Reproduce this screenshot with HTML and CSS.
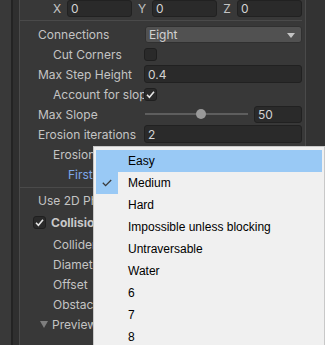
FILE: index.html
```html
<!DOCTYPE html>
<html lang="en">
<head>
    <meta charset="UTF-8">
    <meta name="viewport" content="width=device-width, initial-scale=1.0">
    <title>Grid Graph</title>
    <link rel="stylesheet" href="styles.css">
</head>
<body>
<div class="window">
    <div class="gutter"></div>
    <div class="rail"></div>
    <div class="panel">
        <div class="vec">
            <span class="axis">X</span><div class="field small">0</div>
            <span class="axis">Y</span><div class="field small">0</div>
            <span class="axis">Z</span><div class="field small">0</div>
        </div>
        <div class="sep top"></div>

        <div class="row">
            <div class="label">Connections</div>
            <div class="popup">Eight<span class="arrow"></span></div>
        </div>
        <div class="row">
            <div class="label in1">Cut Corners</div>
            <div class="check"></div>
        </div>
        <div class="row">
            <div class="label">Max Step Height</div>
            <div class="field">0.4</div>
        </div>
        <div class="row">
            <div class="label in1">Account for slopes</div>
            <div class="check on">
                <svg width="11" height="11" viewBox="0 0 11 11"><path d="M2 5.8 L4.4 8.2 L9 2.8" fill="none" stroke="#e6e6e6" stroke-width="1.6"/></svg>
            </div>
        </div>
        <div class="row">
            <div class="label">Max Slope</div>
            <div class="slider"><div class="track"></div><div class="knob"></div></div>
            <div class="field num">50</div>
        </div>
        <div class="row">
            <div class="label">Erosion iterations</div>
            <div class="field">2</div>
        </div>
        <div class="row">
            <div class="label in1 under">Erosion Uses Tags</div>
            <div class="check"></div>
        </div>
        <div class="row">
            <div class="label in2 link under">First Tag</div>
            <div class="popup"><span class="arrow"></span></div>
        </div>
        <div class="sep bottom"></div>

        <div class="row">
            <div class="label under">Use 2D Physics</div>
            <div class="check"></div>
        </div>
        <div class="row head">
            <div class="check on toggle">
                <svg width="11" height="11" viewBox="0 0 11 11"><path d="M2 5.8 L4.4 8.2 L9 2.8" fill="none" stroke="#e6e6e6" stroke-width="1.6"/></svg>
            </div>
            <span class="bold under-head">Collision testing</span>
        </div>
        <div class="row">
            <div class="label in1 under">Collider type</div>
            <div class="popup"><span class="arrow"></span></div>
        </div>
        <div class="row">
            <div class="label in1 under">Diameter</div>
            <div class="field"></div>
        </div>
        <div class="row">
            <div class="label in1 under">Offset</div>
            <div class="field"></div>
        </div>
        <div class="row">
            <div class="label in1 under">Obstacle Layer Mask</div>
            <div class="popup"><span class="arrow"></span></div>
        </div>
        <div class="row">
            <div class="label fold under"><span class="tri"></span>Preview</div>
        </div>
    </div>
    <div class="side"></div>

    <div class="menu">
        <div class="item hot"><span class="tick"></span><span>Easy</span></div>
        <div class="item"><span class="tick sel">
            <svg width="10" height="8" viewBox="0 0 10 8"><path d="M0.8 3.8 L3.6 6.6 L9.2 1" fill="none" stroke="#3a3a3a" stroke-width="1.3"/></svg>
        </span><span>Medium</span></div>
        <div class="item"><span class="tick"></span><span>Hard</span></div>
        <div class="item"><span class="tick"></span><span>Impossible unless blocking</span></div>
        <div class="item"><span class="tick"></span><span>Untraversable</span></div>
        <div class="item"><span class="tick"></span><span>Water</span></div>
        <div class="item"><span class="tick"></span><span>6</span></div>
        <div class="item"><span class="tick"></span><span>7</span></div>
        <div class="item"><span class="tick"></span><span>8</span></div>
    </div>
</div>
</body>
</html>
```

FILE: styles.css
```css
body {
    margin: 0;
    background: #383838;
    font-family: Inter, "Liberation Sans", sans-serif;
    font-size: 12px;
    color: #c4c4c4;
}
.window {
    position: relative;
    display: flex;
    height: 345px;
    overflow: hidden;
}
.gutter {
    width: 11px;
    background: #393939;
    border-right: 2px solid #232323;
}
.rail { width: 6px; background: #2f2f2f; }
.panel {
    width: 287px;
    flex: none;
    margin-top: -2px;
    padding-right: 3px;
    box-sizing: border-box;
    border-left: 1px solid #4a4a4a;
    border-right: 1px solid #4a4a4a;
    background: #383838;
}
.side { flex: 1; background: #333; }

.vec {
    display: flex;
    align-items: center;
    height: 20px;
    padding-left: 27px;
}
.axis { width: 20px; text-align: center; }
.sep { height: 1px; background: #4a4a4a; }
.sep.top { margin: 2px 0 3px; }
.sep.bottom { margin: 3px 0 2px; }

.row {
    display: flex;
    align-items: center;
    height: 20px;
    padding-left: 18px;
}
.row.head { margin: 2px 0; }
.label {
    width: 106px;
    flex: none;
    box-sizing: border-box;
    white-space: nowrap;
    overflow: hidden;
}
/* rows hidden behind the popup menu: clip labels at its left edge */
.label.under { width: 55px; margin-right: 51px; }
.under-head {
    width: 42px;
    flex: none;
    overflow: hidden;
    white-space: nowrap;
    margin-right: 51px;
}
.in1 { padding-left: 15px; }
.in2 { padding-left: 30px; }
.link { color: #7fa7e8; }
.bold { font-weight: bold; color: #c8c8c8; }

.field {
    flex: 1;
    height: 18px;
    line-height: 17px;
    box-sizing: border-box;
    padding-left: 3px;
    background: #2a2a2a;
    border: 1px solid #212121;
    border-radius: 3px;
    color: #d2d2d2;
}
.field.small { flex: none; width: 65px; height: 17px; line-height: 15px; }
.field.num { flex: none; width: 48px; height: 17px; line-height: 15px; }
.popup {
    position: relative;
    flex: 1;
    height: 17px;
    line-height: 15px;
    box-sizing: border-box;
    padding-left: 3px;
    margin-left: 1px;
    background: #515151;
    border: 1px solid #303030;
    border-radius: 3px;
    color: #d2d2d2;
}
.arrow {
    position: absolute;
    right: 6px;
    top: 6px;
    border-left: 4px solid transparent;
    border-right: 4px solid transparent;
    border-top: 5px solid #c4c4c4;
}
.check {
    width: 13px;
    height: 13px;
    box-sizing: border-box;
    background: #2a2a2a;
    border: 1px solid #1f1f1f;
    border-radius: 3px;
    display: flex;
    align-items: center;
    justify-content: center;
}
.check.toggle { margin-left: -5px; margin-right: 5px; }

.slider {
    position: relative;
    flex: 1;
    height: 20px;
    margin-right: 6px;
}
.track {
    position: absolute;
    left: 1px;
    right: 0;
    top: 9px;
    height: 2px;
    background: #5e5e5e;
}
.knob {
    position: absolute;
    left: 52px;
    top: 5px;
    width: 10px;
    height: 10px;
    border-radius: 50%;
    background: #999;
}
.fold { display: flex; align-items: center; }
.tri {
    flex: none;
    margin: 0 4px 0 2px;
    border-left: 4px solid transparent;
    border-right: 4px solid transparent;
    border-top: 7px solid #7e7e7e;
}

.menu {
    position: absolute;
    left: 93px;
    top: 146px;
    width: 232px;
    box-sizing: border-box;
    padding: 3px 2px;
    background: #f0f0f0;
    border: 1px solid #c8c8c8;
    font-family: "Liberation Sans", Arial, sans-serif;
    font-size: 12px;
    color: #000;
}
.item {
    display: flex;
    align-items: center;
    height: 22px;
}
.item.hot { background: #99c9f5; }
.tick {
    width: 22px;
    height: 22px;
    margin-right: 10px;
    display: flex;
    align-items: center;
    justify-content: center;
}
.tick.sel { background: #99c9f5; }
```
